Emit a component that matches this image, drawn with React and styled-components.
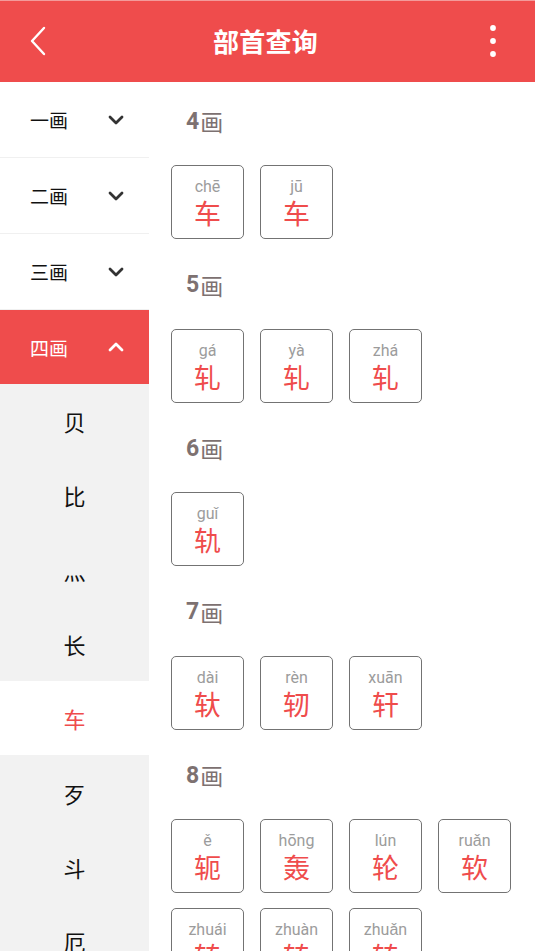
import React from "react";
import styled, { createGlobalStyle } from "styled-components";

const Global = createGlobalStyle`
  html, body { margin: 0; padding: 0; background: #fff; }
  body { font-family: Roboto, "Noto Sans CJK SC", sans-serif; }
  * { box-sizing: border-box; }
`;

const RED = "#ef4c4c";

const Page = styled.div`
  width: 535px;
  height: 951px;
  display: flex;
  flex-direction: column;
  overflow: hidden;
`;

const Header = styled.header`
  height: 82px;
  flex: none;
  background: ${RED};
  border-top: 1px solid #f39a9a;
  display: flex;
  align-items: center;
  justify-content: space-between;
  padding: 0 24px 2px 20px;
`;

const IconButton = styled.div`
  width: 36px;
  height: 40px;
  display: flex;
  align-items: center;
  justify-content: center;
`;

const Title = styled.h1`
  margin: 0;
  color: #fff;
  font-family: "Noto Sans CJK SC", sans-serif;
  font-weight: 700;
  font-size: 26px;
  line-height: 30px;
  letter-spacing: 0.3px;
`;

const Body = styled.div`
  flex: 1;
  display: flex;
  min-height: 0;
`;

const Sidebar = styled.nav`
  width: 149px;
  flex: none;
  overflow: hidden;
  background: #f2f2f2;
`;

const GroupRow = styled.div`
  height: ${(p) => (p.$open ? "74px" : "76px")};
  display: flex;
  align-items: center;
  justify-content: space-between;
  padding: 0 25px 0 30px;
  background: ${(p) => (p.$open ? RED : "#fff")};
  color: ${(p) => (p.$open ? "#fff" : "#111")};
  border-bottom: ${(p) => (p.$open ? "none" : "1px solid #f0f0f0")};
  font-family: "Noto Sans CJK SC", sans-serif;
  font-size: 19px;
`;

const SubItem = styled.div`
  height: 74.3px;
  display: flex;
  align-items: center;
  justify-content: center;
  font-family: "Noto Sans CJK SC", sans-serif;
  font-size: 22px;
  background: ${(p) => (p.$active ? "#fff" : "#f2f2f2")};
  color: ${(p) => (p.$active ? RED : "#111")};
`;

const Content = styled.main`
  flex: 1;
  overflow: hidden;
  padding: 0 0 0 22px;
`;

const Section = styled.section`
  padding-bottom: 6.5px;
`;

const SectionTitle = styled.div`
  height: 78px;
  display: flex;
  align-items: center;
  padding-left: 15px;
  color: #7d7171;
  font-size: 23px;
  font-family: "Noto Sans CJK SC", sans-serif;
  font-weight: 400;
`;

const Num = styled.span`
  font-family: Roboto, sans-serif;
  font-weight: 700;
  font-size: 23px;
  margin-right: 1px;
`;

const Grid = styled.div`
  margin-top: 5px;
  display: flex;
  flex-wrap: wrap;
  gap: 15px 16px;
`;

const Card = styled.div`
  width: 73px;
  height: 74px;
  border: 1.5px solid #737373;
  border-radius: 5px;
  display: flex;
  flex-direction: column;
  align-items: center;
  padding-top: 12px;
`;

const Pinyin = styled.div`
  font-family: Roboto, sans-serif;
  font-size: 16px;
  line-height: 17px;
  color: #9c9c9c;
`;

const Char = styled.div`
  font-family: "Noto Sans CJK SC", sans-serif;
  font-size: 27px;
  line-height: 30px;
  margin-top: 3px;
  color: ${RED};
`;

const Chevron = ({ up, color }) => (
  <svg width="16" height="10" viewBox="0 0 16 10">
    <polyline
      points={up ? "2,8 8,2 14,8" : "2,2 8,8 14,2"}
      fill="none"
      stroke={color}
      strokeWidth="2.8"
      strokeLinecap="round"
      strokeLinejoin="round"
    />
  </svg>
);

const groups = ["一画", "二画", "三画", "四画"];
const subs = ["贝", "比", "灬", "长", "车", "歹", "斗", "厄", "戈", "户"];

const sections = [
  { n: 4, items: [["chē", "车"], ["jū", "车"]] },
  { n: 5, items: [["gá", "轧"], ["yà", "轧"], ["zhá", "轧"]] },
  { n: 6, items: [["guǐ", "轨"]] },
  { n: 7, items: [["dài", "轪"], ["rèn", "轫"], ["xuān", "轩"]] },
  {
    n: 8,
    items: [
      ["ě", "轭"],
      ["hōng", "轰"],
      ["lún", "轮"],
      ["ruǎn", "软"],
      ["zhuái", "转"],
      ["zhuàn", "转"],
      ["zhuǎn", "转"],
    ],
  },
];

export default function App() {
  return (
    <Page>
      <Global />
      <Header>
        <IconButton>
          <svg width="18" height="30" viewBox="0 0 18 30">
            <polyline
              points="15,2 3,15 15,28"
              fill="none"
              stroke="#fff"
              strokeWidth="2.4"
              strokeLinecap="round"
              strokeLinejoin="round"
            />
          </svg>
        </IconButton>
        <Title>部首查询</Title>
        <IconButton>
          <svg width="8" height="34" viewBox="0 0 8 34">
            <circle cx="4" cy="4" r="2.9" fill="#fff" />
            <circle cx="4" cy="17" r="2.9" fill="#fff" />
            <circle cx="4" cy="30" r="2.9" fill="#fff" />
          </svg>
        </IconButton>
      </Header>
      <Body>
        <Sidebar>
          {groups.map((g, i) => {
            const open = i === 3;
            return (
              <GroupRow key={g} $open={open}>
                <span>{g}</span>
                <Chevron up={open} color={open ? "#fff" : "#333"} />
              </GroupRow>
            );
          })}
          {subs.map((s) => (
            <SubItem key={s} $active={s === "车"}>
              {s}
            </SubItem>
          ))}
        </Sidebar>
        <Content>
          {sections.map((sec) => (
            <Section key={sec.n}>
              <SectionTitle>
                <Num>{sec.n}</Num>画
              </SectionTitle>
              <Grid>
                {sec.items.map(([py, ch], i) => (
                  <Card key={i}>
                    <Pinyin>{py}</Pinyin>
                    <Char>{ch}</Char>
                  </Card>
                ))}
              </Grid>
            </Section>
          ))}
        </Content>
      </Body>
    </Page>
  );
}
